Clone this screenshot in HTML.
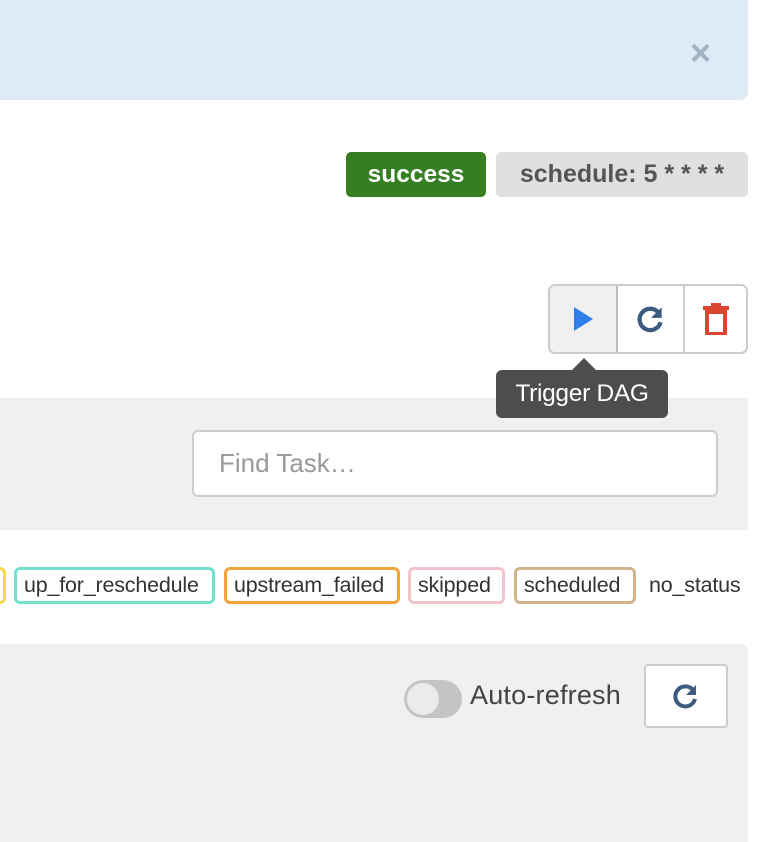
<!DOCTYPE html>
<html><head><style>
body{margin:0;width:784px;height:842px;background:#fff;position:relative;overflow:hidden;font-family:"Liberation Sans",sans-serif}
.a{position:absolute;box-sizing:border-box}
.pill{position:absolute;top:567px;height:37px;border:3px solid;border-radius:6px;box-sizing:border-box;font-size:21.5px;color:#333;line-height:31px;padding:0 7px;white-space:nowrap;letter-spacing:-0.2px}
</style></head><body>
<div class="a" style="left:0;top:0;width:748px;height:100px;background:#deeaf6;border-radius:0 0 8px 0"></div>
<div class="a" style="left:690px;top:32px;font-size:36px;color:#9fb3c4;font-weight:bold">×</div>
<div class="a" style="left:346px;top:152px;width:140px;height:45px;background:#367e22;border-radius:5px;color:#fff;font-weight:bold;font-size:24.5px;text-align:center;line-height:45px">success</div>
<div class="a" style="left:496px;top:152px;width:252px;height:45px;background:#e0e0e0;border-radius:5px;color:#555;font-weight:bold;font-size:25px;text-align:center;line-height:45px">schedule: 5 * * * *</div>
<div class="a" style="left:548px;top:284px;width:200px;height:70px;border:2px solid #ccc;border-radius:7px;overflow:hidden;display:flex">
<div style="width:66px;background:#f0f0f0;border-right:2px solid #bbb;display:flex;align-items:center;justify-content:center"><svg width="22" height="26"><path d="M2 1L21 13L2 25Z" fill="#2f80ed"/></svg></div>
<div style="width:65px;border-right:2px solid #ccc;display:flex;align-items:center;justify-content:center"><svg width="32" height="32" viewBox="0 0 30 30"><path d="M22 9A10 10 0 1 0 24 18" fill="none" stroke="#3d5a80" stroke-width="4"/><path d="M25 4V14H15Z" fill="#3d5a80"/></svg></div>
<div style="flex:1;display:flex;align-items:center;justify-content:center"><svg width="26" height="32" viewBox="0 0 26 32"><rect x="0" y="3" width="26" height="4" fill="#d9452f"/><rect x="8" y="0" width="10" height="4" fill="#d9452f"/><rect x="4" y="9" width="18" height="22" fill="none" stroke="#d9452f" stroke-width="4"/></svg></div>
</div>
<div class="a" style="left:0;top:398px;width:748px;height:132px;background:#f0f0f0"></div>
<div class="a" style="left:496px;top:370px;width:172px;height:48px;background:#4f4d4b;border-radius:6px;color:#fff;font-size:24.5px;text-align:center;line-height:48px;letter-spacing:-0.3px">Trigger DAG</div>
<div class="a" style="left:572px;top:358px;width:0;height:0;border-left:12px solid transparent;border-right:12px solid transparent;border-bottom:12px solid #4f4d4b"></div>
<div class="a" style="left:192px;top:430px;width:526px;height:67px;background:#fff;border:2px solid #ccc;border-radius:6px;color:#999;font-size:26px;line-height:63px;padding-left:25px">Find Task…</div>
<div class="pill" style="left:-20px;width:26px;border-color:#f8d94a"></div>
<div class="pill" style="left:14px;width:201px;border-color:#72dfcf">up_for_reschedule</div>
<div class="pill" style="left:224px;width:176px;border-color:#f2a53a">upstream_failed</div>
<div class="pill" style="left:408px;width:97px;border-color:#f3c3cb">skipped</div>
<div class="pill" style="left:514px;width:122px;border-color:#d0b48c">scheduled</div>
<div class="a" style="left:649px;top:570px;font-size:21.5px;color:#333;line-height:31px;letter-spacing:-0.2px">no_status</div>
<div class="a" style="left:0;top:644px;width:748px;height:198px;background:#f0f0f0;border-radius:0 8px 0 0"></div>
<div class="a" style="left:404px;top:680px;width:58px;height:38px;background:#c4c4c4;border-radius:19px"><div style="position:absolute;left:3px;top:3px;width:32px;height:32px;border-radius:50%;background:#ebebeb"></div></div>
<div class="a" style="left:470px;top:680px;font-size:27px;color:#444;letter-spacing:0.2px">Auto-refresh</div>
<div class="a" style="left:644px;top:664px;width:84px;height:64px;background:#fff;border:2px solid #ccc;border-radius:4px;display:flex;align-items:center;justify-content:center"><svg width="30" height="30" viewBox="0 0 30 30"><path d="M22 9A10 10 0 1 0 24 18" fill="none" stroke="#3d5a80" stroke-width="4"/><path d="M25 4V14H15Z" fill="#3d5a80"/></svg></div>
</body></html>
